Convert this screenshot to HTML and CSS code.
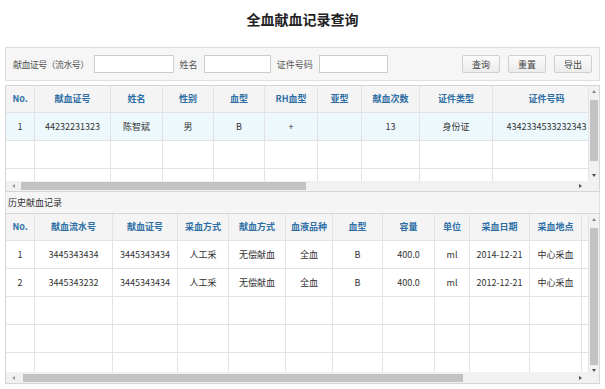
FILE: index.html
```html
<!DOCTYPE html>
<html lang="zh-CN">
<head>
<meta charset="utf-8">
<title>全血献血记录查询</title>
<link rel="stylesheet" href="styles.css">
</head>
<body>
<div class="page">
  <h1 class="title">全血献血记录查询</h1>

  <div class="search">
    <span class="lbl lbl-tight">献血证号（流水号）</span>
    <input class="inp inp-serial" type="text">
    <span class="lbl">姓名</span>
    <input class="inp inp-name" type="text">
    <span class="lbl">证件号码</span>
    <input class="inp inp-id" type="text">
    <div class="btns">
      <button class="btn">查询</button>
      <button class="btn">重置</button>
      <button class="btn">导出</button>
    </div>
  </div>

  <div class="grid grid-top">
    <div class="viewport">
      <table class="tbl">
        <colgroup>
          <col class="c29"><col class="c76"><col class="c52"><col class="c51"><col class="c51"><col class="c53"><col class="c44"><col class="c58"><col class="c73"><col class="c108"><col class="c120"><col class="c120"><col class="c120">
        </colgroup>
        <thead>
          <tr><th>No.</th><th>献血证号</th><th>姓名</th><th>性别</th><th>血型</th><th>RH血型</th><th>亚型</th><th>献血次数</th><th>证件类型</th><th>证件号码</th><th></th><th></th><th></th></tr>
        </thead>
        <tbody>
          <tr class="sel"><td>1</td><td>44232231323</td><td>陈智斌</td><td>男</td><td>B</td><td>+</td><td></td><td>13</td><td>身份证</td><td>4342334533232343</td><td></td><td></td><td></td></tr>
          <tr><td></td><td></td><td></td><td></td><td></td><td></td><td></td><td></td><td></td><td></td><td></td><td></td><td></td></tr>
          <tr><td></td><td></td><td></td><td></td><td></td><td></td><td></td><td></td><td></td><td></td><td></td><td></td><td></td></tr>
        </tbody>
      </table>
    </div>
    <div class="vscroll">
      <span class="arr arr-up"></span>
      <div class="vtrack"><div class="vthumb vthumb-top"></div></div>
      <span class="arr arr-down"></span>
    </div>
    <div class="hscroll">
      <span class="arr arr-left"></span>
      <div class="htrack"><div class="hthumb hthumb-top"></div></div>
      <span class="arr arr-right"></span>
    </div>
    <div class="corner"></div>
  </div>

  <div class="section-label">历史献血记录</div>

  <div class="grid grid-bottom">
    <div class="viewport">
      <table class="tbl">
        <colgroup>
          <col class="c29"><col class="c78"><col class="c65"><col class="c51"><col class="c57"><col class="c47"><col class="c50"><col class="c52"><col class="c35"><col class="c60"><col class="c52"><col class="c70"><col class="c70">
        </colgroup>
        <thead>
          <tr><th>No.</th><th>献血流水号</th><th>献血证号</th><th>采血方式</th><th>献血方式</th><th>血液品种</th><th>血型</th><th>容量</th><th>单位</th><th>采血日期</th><th>采血地点</th><th></th><th></th></tr>
        </thead>
        <tbody>
          <tr><td>1</td><td>3445343434</td><td>3445343434</td><td>人工采</td><td>无偿献血</td><td>全血</td><td>B</td><td>400.0</td><td>ml</td><td>2014-12-21</td><td>中心采血</td><td></td><td></td></tr>
          <tr><td>2</td><td>3445343232</td><td>3445343434</td><td>人工采</td><td>无偿献血</td><td>全血</td><td>B</td><td>400.0</td><td>ml</td><td>2012-12-21</td><td>中心采血</td><td></td><td></td></tr>
          <tr><td></td><td></td><td></td><td></td><td></td><td></td><td></td><td></td><td></td><td></td><td></td><td></td><td></td></tr>
          <tr><td></td><td></td><td></td><td></td><td></td><td></td><td></td><td></td><td></td><td></td><td></td><td></td><td></td></tr>
          <tr><td></td><td></td><td></td><td></td><td></td><td></td><td></td><td></td><td></td><td></td><td></td><td></td><td></td></tr>
        </tbody>
      </table>
    </div>
    <div class="vscroll">
      <span class="arr arr-up"></span>
      <div class="vtrack"><div class="vthumb vthumb-bottom"></div></div>
      <span class="arr arr-down"></span>
    </div>
    <div class="hscroll">
      <span class="arr arr-left"></span>
      <div class="htrack"><div class="hthumb hthumb-bottom"></div></div>
      <span class="arr arr-right"></span>
    </div>
    <div class="corner"></div>
  </div>
</div>
</body>
</html>
```

FILE: styles.css
```css
* { box-sizing: border-box; }

html, body {
  margin: 0;
  padding: 0;
  background: #ffffff;
}

body {
  font-family: "Noto Sans CJK SC", "Noto Sans", sans-serif;
  font-size: 9px;
  color: #333333;
}

.page {
  padding: 0 5px;
  width: 605px;
}

.title {
  margin: 0;
  height: 47px;
  line-height: 38px;
  text-align: center;
  font-size: 14px;
  font-weight: bold;
  color: #222222;
}

/* search bar */
.search {
  display: flex;
  align-items: center;
  height: 34px;
  padding: 0 7px 0 7px;
  background: #f6f6f6;
  border: 1px solid #dedede;
  margin-bottom: 4px;
}

.lbl {
  color: #555555;
  font-size: 9px;
  margin-right: 6px;
  white-space: nowrap;
}
.lbl-tight {
  letter-spacing: -0.6px;
  margin-right: 5px;
}

.inp {
  height: 18px;
  border: 1px solid #cccccc;
  background: #ffffff;
  padding: 0 3px;
  margin: 0 6px 0 0;
  font-size: 9px;
}
.inp-serial { width: 80px; }
.inp-name { width: 67px; }
.inp-id { width: 69px; }

.btns {
  margin-left: auto;
  display: flex;
  gap: 8px;
}

.btn {
  width: 38px;
  height: 18px;
  padding: 0;
  border: 1px solid #cfcfcf;
  border-radius: 2px;
  background: linear-gradient(#fbfbfb, #ececec);
  font-family: inherit;
  font-size: 9px;
  color: #444444;
}

/* grids */
.grid {
  display: grid;
  grid-template-columns: 1fr 11px;
  border: 1px solid #d6d6d6;
  background: #ffffff;
}
.grid-top { grid-template-rows: 95px 10px; }
.grid-bottom { grid-template-rows: 158px 11px; }

.viewport {
  overflow: hidden;
  position: relative;
}

.tbl {
  table-layout: fixed;
  border-collapse: separate;
  border-spacing: 0;
  width: max-content;
}

.tbl th, .tbl td {
  padding: 0;
  text-align: center;
  white-space: nowrap;
  overflow: hidden;
  border-right: 1px solid #e3e3e3;
  border-bottom: 1px solid #e3e3e3;
}

.tbl th {
  height: 27px;
  line-height: 26px;
  background: #f4f4f4;
  color: #2d6fa5;
  font-weight: bold;
  font-size: 9px;
}

.tbl td {
  height: 28px;
  line-height: 27px;
  font-size: 9px;
  color: #333333;
}

.tbl tr.sel td { background: #edf8fc; }

.c29 { width: 29px; }
.c35 { width: 35px; }
.c44 { width: 44px; }
.c47 { width: 47px; }
.c50 { width: 50px; }
.c51 { width: 51px; }
.c52 { width: 52px; }
.c53 { width: 53px; }
.c57 { width: 57px; }
.c58 { width: 58px; }
.c60 { width: 60px; }
.c65 { width: 65px; }
.c70 { width: 70px; }
.c73 { width: 73px; }
.c76 { width: 76px; }
.c78 { width: 78px; }
.c108 { width: 108px; }
.c120 { width: 120px; }

/* scrollbars */
.vscroll {
  background: #f1f1f1;
  display: flex;
  flex-direction: column;
  align-items: center;
  border-left: 1px solid #e6e6e6;
}
.vtrack {
  flex: 1;
  width: 100%;
  display: flex;
  flex-direction: column;
}
.vthumb {
  background: #c2c2c2;
  margin: 0 1px;
}
.vthumb-top { margin-top: 3px; height: 61px; }
.vthumb-bottom { margin-top: 3px; height: 137px; }

.hscroll {
  background: #f1f1f1;
  display: flex;
  align-items: center;
  padding: 0 3px;
}
.htrack {
  flex: 1;
  height: 100%;
  display: flex;
  align-items: center;
}
.hthumb {
  background: #c2c2c2;
  height: 8px;
}
.hthumb-top { margin-left: 3px; width: 285px; }
.hthumb-bottom { margin-left: 5px; width: 440px; }

.corner { background: #f1f1f1; }

.arr {
  width: 0;
  height: 0;
  flex: none;
  margin: 4px 3px;
}
.arr-up { border-left: 2px solid transparent; border-right: 2px solid transparent; border-bottom: 3px solid #8a8a8a; }
.arr-down { border-left: 2px solid transparent; border-right: 2px solid transparent; border-top: 3px solid #505050; }
.arr-left { border-top: 2px solid transparent; border-bottom: 2px solid transparent; border-right: 3px solid #9a9a9a; }
.arr-right { border-top: 2px solid transparent; border-bottom: 2px solid transparent; border-left: 3px solid #505050; }

.section-label {
  height: 21px;
  line-height: 21px;
  padding-left: 2px;
  background: #f5f5f5;
  border-left: 1px solid #e0e0e0;
  border-right: 1px solid #e0e0e0;
  color: #333333;
  font-size: 9px;
}
```
